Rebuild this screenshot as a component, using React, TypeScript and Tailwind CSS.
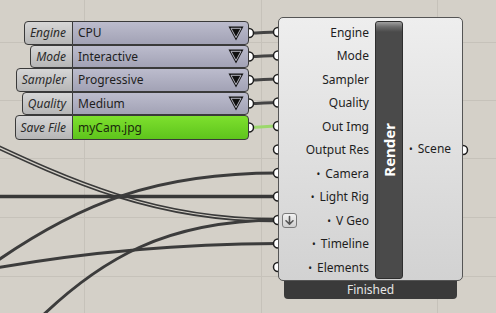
import { ReactNode } from 'react';

const lists = [
	{ label: 'Engine', value: 'CPU', h: 'h-[24px]', y: 33 },
	{ label: 'Mode', value: 'Interactive', h: 'h-[23px]', y: 56.5 },
	{ label: 'Sampler', value: 'Progressive', h: 'h-[24px]', y: 80 },
	{ label: 'Quality', value: 'Medium', h: 'h-[23px]', y: 103.5 },
];

const inputs = [
	{ name: 'Engine' },
	{ name: 'Mode' },
	{ name: 'Sampler' },
	{ name: 'Quality' },
	{ name: 'Out Img' },
	{ name: 'Output Res' },
	{ name: 'Camera', dot: true },
	{ name: 'Light Rig', dot: true },
	{ name: 'V Geo', dot: true, arrow: true },
	{ name: 'Timeline', dot: true },
	{ name: 'Elements', dot: true },
];

const inY = (i: number) => 32 + 23.5 * i;

const Dot = () => <span className="mr-[5px] text-[10px] leading-none">•</span>;

const Triangle = () => (
	<svg width="16" height="15" viewBox="0 0 16 15">
		<polygon points="0.5,0.5 15.5,0.5 8,14.5" fill="#111" />
		<polygon points="3,2.3 13,2.3 8,11.6" fill="#111" stroke="#c9c9d6" strokeWidth="0.9" />
	</svg>
);

const Label = ({ children }: { children: ReactNode }) => (
	<div className="flex h-full items-center justify-end rounded-l-[4px] border border-[#3a3a3a] bg-[linear-gradient(to_bottom,#d6d6d6,#b6b6b6)] pl-[5px] pr-[6px] text-[12px] italic text-[#2a2a2a]">
		{children}
	</div>
);

const ValueList = ({ label, value, h }: { label: string; value: string; h: string }) => (
	<div className={`flex ${h}`}>
		<Label>{label}</Label>
		<div className="-ml-px flex w-[177px] items-center justify-between rounded-r-[4px] border border-[#3a3a3a] bg-[linear-gradient(to_bottom,#bcbccd,#a2a2b5)] pl-[5px] pr-[4px] text-[12px] text-[#1e1e1e]">
			<span>{value}</span>
			<Triangle />
		</div>
	</div>
);

const ArrowIcon = () => (
	<div className="flex h-[15px] w-[15px] items-center justify-center rounded-[3px] border border-[#7a7a7a] bg-[linear-gradient(to_bottom,#f2f2f2,#cfcfcf)]">
		<svg width="11" height="11" viewBox="0 0 11 11">
			<path d="M5.5 1.5 V9 M2 5.8 L5.5 9.2 L9 5.8" fill="none" stroke="#555" strokeWidth="1.6" strokeLinecap="round" strokeLinejoin="round" />
		</svg>
	</div>
);

const Canvas = () => (
	<svg className="absolute inset-0" width="496" height="313">
		<g stroke="#c6c2ba" strokeWidth="1">
			<line x1="0" y1="42.5" x2="496" y2="42.5" />
			<line x1="0" y1="100.5" x2="496" y2="100.5" />
			<line x1="0" y1="158.5" x2="496" y2="158.5" />
			<line x1="0" y1="217.5" x2="496" y2="217.5" />
			<line x1="0" y1="276.5" x2="496" y2="276.5" />
			<line x1="84.5" y1="0" x2="84.5" y2="313" />
			<line x1="261.5" y1="0" x2="261.5" y2="313" />
			<line x1="437.5" y1="0" x2="437.5" y2="313" />
		</g>
		<g fill="none" strokeLinecap="round">
			<path d="M -30 134 C 60 176, 150 221, 278 220" stroke="#3a3a3a" strokeWidth="4.5" />
			<path d="M -30 134 C 60 176, 150 221, 278 220" stroke="#d4d0c8" strokeWidth="1.2" />
			<path d="M -10 196.5 L 278 196.5" stroke="#383838" strokeWidth="3.5" />
			<path d="M -20 273 C 80 200, 160 173, 278 173" stroke="#3c3c3c" strokeWidth="3" />
			<path d="M -20 271 C 80 252, 180 244, 278 243.5" stroke="#3c3c3c" strokeWidth="3" />
			<path d="M 14 345 C 100 250, 175 221, 278 220" stroke="#3c3c3c" strokeWidth="3" />
			{lists.map((l, i) => (
				<path
					key={l.label}
					d={`M 249 ${l.y} C 262 ${l.y}, 265 ${inY(i)}, 278 ${inY(i)}`}
					stroke="#444"
					strokeWidth="3"
				/>
			))}
			<path d="M 249 127.5 C 262 127.5, 265 126, 278 126" stroke="#9cd86c" strokeWidth="3" />
		</g>
		<g fill="#fff" stroke="#1e1e1e" strokeWidth="1.5">
			{lists.map((l) => (
				<circle key={l.label} cx="249" cy={l.y} r="4.5" />
			))}
			<circle cx="249" cy="127.5" r="4.5" />
			{inputs.map((p, i) => (
				<circle key={p.name} cx="278" cy={inY(i)} r="4.5" />
			))}
			<circle cx="463" cy="150" r="4.5" />
		</g>
	</svg>
);

export default function App() {
	return (
		<div className="relative h-[313px] w-[496px] overflow-hidden bg-[#d4d0c8] font-['Noto_Sans',sans-serif]">
			<Canvas />

			<div className="absolute left-[13px] top-[21px] flex w-[236px] flex-col items-end">
				{lists.map((l) => (
					<ValueList key={l.label} {...l} />
				))}
				<div className="flex h-[25px]">
					<Label>Save File</Label>
					<div className="-ml-px flex w-[177px] items-center rounded-r-[4px] border border-[#3a3a3a] bg-[linear-gradient(to_bottom,#7ee02e,#5ec41c)] pl-[5px] text-[12px] text-[#1a2a0c]">
						myCam.jpg
					</div>
				</div>
			</div>

			<div className="absolute left-[278px] top-[17px] flex w-[185px] flex-col items-center">
				<div className="flex h-[264px] w-full rounded-[5px] border border-[#555] bg-[linear-gradient(to_bottom,#eeeeee,#d2d2d2)] text-[12px] text-[#1e1e1e]">
					<div className="flex w-[96px] flex-col pt-[3px]">
						{inputs.map((p) => (
							<div key={p.name} className="flex h-[23.5px] items-center justify-between pl-[3px] pr-[6px]">
								{p.arrow ? <ArrowIcon /> : <span />}
								<span className="flex items-center">
									{p.dot ? <Dot /> : null}
									{p.name}
								</span>
							</div>
						))}
					</div>
					<div className="mb-[1px] mt-[3px] flex w-[28px] items-center justify-center rounded-[3px] border border-[#2e2e2e] bg-[linear-gradient(to_bottom,#a0a0a0_0px,#6a6a6a_5px,#4a4a4a_10px,#4a4a4a_100%)]">
						<span className="rotate-180 text-[15px] font-bold text-white [writing-mode:vertical-rl]">Render</span>
					</div>
					<div className="flex flex-1 items-center pl-[6px]">
						<Dot />
						Scene
					</div>
				</div>
				<div className="flex h-[18px] w-[173px] items-center justify-center rounded-b-[4px] bg-[#3a3a3a] text-[12px] text-[#e6e6e6]">
					Finished
				</div>
			</div>
		</div>
	);
}
